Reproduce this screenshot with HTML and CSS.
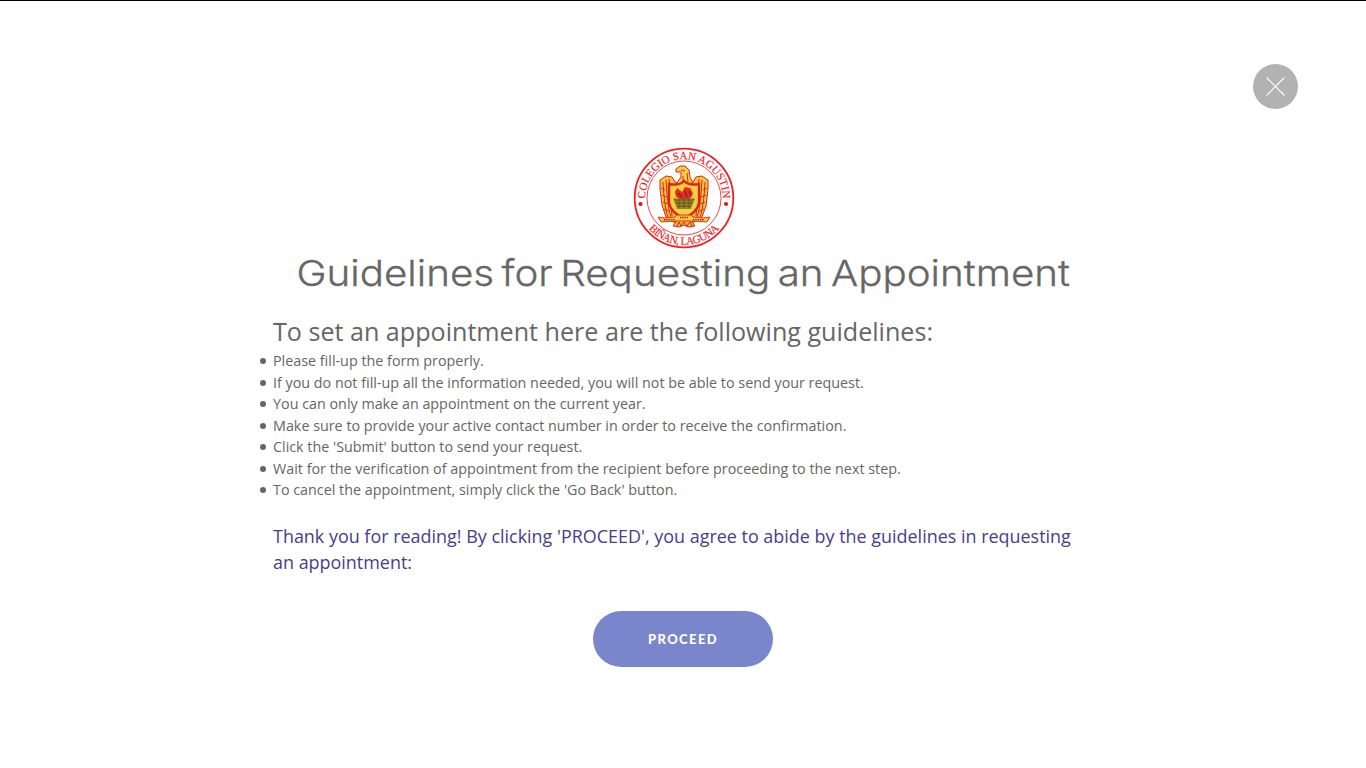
FILE: index.html
```html
<!DOCTYPE html>
<html lang="en">
<head>
<meta charset="utf-8">
<title>Guidelines for Requesting an Appointment</title>
<link rel="stylesheet" href="styles.css">
</head>
<body>
<header class="topbar">
  <button class="close" aria-label="Close">
    <svg width="45" height="45" viewBox="0 0 45 45"><path d="M13.5 13.5l18 18M31.5 13.5l-18 18" stroke="#fff" stroke-width="1.1" fill="none"/></svg>
  </button>
</header>
<main class="content">
  <svg class="seal" width="102" height="102" viewBox="-51 -51 102 102">
    <defs>
      <path id="arcFull" d="M0 38.8A38.8 38.8 0 1 1 .1 38.8"/>
      <path id="arcBottom" d="M-46.8 0A46.8 46.8 0 0 0 46.8 0"/>
    </defs>
    <circle r="49.3" fill="#fff" stroke="#f21d22" stroke-width="1.8"/>
    <circle r="37" fill="none" stroke="#f4494c" stroke-width="1"/>
    <text class="seal-text"><textPath href="#arcFull" startOffset="50%" text-anchor="middle" textLength="123">COLEGIO SAN AGUSTIN</textPath></text>
    <text class="seal-text"><textPath href="#arcBottom" startOffset="50%" text-anchor="middle" textLength="80">BIÑAN, LAGUNA</textPath></text>
    <circle cx="-43.5" cy="6" r="2.1" fill="#e8121a"/><circle cx="42" cy="6" r="2.1" fill="#e8121a"/>
    <g stroke="#d5281c" stroke-width="1" stroke-linejoin="round">
      <path d="M-24-18L-18-22L-12-21L-9-16L-5-15L5-15L9-16L12-21L18-22L24-18L24-9L22 8L18 19L10 24L-11 24L-18 19L-22 7L-24-9Z" fill="#f8c43c"/>
      <path d="M-21-16Q-20 7-16 20M-18-18Q-17 5-13 20M-15-19L-12 18M21-16Q20 7 16 20M18-18Q17 5 13 20M15-19L12 18" fill="none"/>
      <path d="M-23-10l4 2M-22-3l5 2M-21 4l5 2M-20 11l5 2M23-10l-4 2M22-3l-5 2M21 4l-5 2M20 11l-5 2" fill="none"/>
      <path d="M-8-26L-8-29L-4-32L1-32L5-28L6-21L9-15L-8-14L-3-21L-3-26Z" fill="#f9cd47"/>
      <path d="M-3-28L1-27M-1-22L-1-15M3-25L4-16" fill="none"/>
    </g>
    <path d="M-15-14Q-5-12 0-17Q5-12 15-14L15 5Q13 15 0 20Q-13 15-15 5Z" fill="#f8ce42" stroke="#db261d" stroke-width="2.4"/>
    <path d="M-9-6L-7-10L-2-6L1-11L6-10L9-5L7 0L0 3L-8-1Z" fill="#e62a1e"/>
    <path d="M-6-5L-2-1M1-7L3-1M5-7L7-3" stroke="#7c241c" stroke-width="1.2"/>
    <path d="M-11 0L-5 1L5 1L11 0L7 11L-7 11Z" fill="#98842b"/>
    <path d="M-10 2H10M-9 5H9M-7 8H7M-5 0V10M0 0V10M5 0V10" stroke="#53521f" stroke-width=".8"/>
    <path d="M-7 22L-11 28L-4 29L0 27L4 29L11 28L7 22Z" fill="#f4b43a" stroke="#d5281c"/>
    <path d="M-7 28l2-4 2 4 3-4 3 4 3-4 2 4" fill="none" stroke="#d5281c"/>
    <path d="M-26 19L-19 20L-9 19L-7 17H7L9 19L19 20L26 19L23 24L8 23H-8L-23 24Z" fill="#f8c640" stroke="#d5281c" stroke-width=".9"/>
    <path d="M-20 21.8L-9 21.6M9 21.6L20 21.8M-4 19.5H4" stroke="#a52b18" stroke-width="1.4" stroke-dasharray="1.5 .8"/>
  </svg>
  <h1 class="title"><span class="title-text">Guidelines for Requesting an Appointment</span></h1>
  <section class="guidelines">
    <h2 class="subtitle">To set an appointment here are the following guidelines:</h2>
    <ul class="rules">
      <li>Please fill-up the form properly.</li>
      <li>If you do not fill-up all the information needed, you will not be able to send your request.</li>
      <li>You can only make an appointment on the current year.</li>
      <li>Make sure to provide your active contact number in order to receive the confirmation.</li>
      <li>Click the 'Submit' button to send your request.</li>
      <li>Wait for the verification of appointment from the recipient before proceeding to the next step.</li>
      <li>To cancel the appointment, simply click the 'Go Back' button.</li>
    </ul>
    <p class="thanks">Thank you for reading! By clicking 'PROCEED', you agree to abide by the guidelines in requesting an appointment:</p>
  </section>
  <button class="proceed">PROCEED</button>
</main>
</body>
</html>
```
FILE: styles.css
```css
* { box-sizing: border-box; }
body {
  margin: 0;
  height: 768px;
  overflow: hidden;
  border-top: 1px solid #000;
  background: #fff;
  color: #666;
  font-family: "Open Sans", "Noto Sans", sans-serif;
}
.topbar { display: flex; justify-content: flex-end; padding: 63px 68px 0 0; }
.close {
  width: 45px;
  height: 45px;
  padding: 0;
  border: 0;
  border-radius: 50%;
  background: #b2b2b2;
}
.close svg { display: block; }
.content { display: flex; flex-direction: column; align-items: center; padding-top: 38px; }
.seal { display: block; margin-left: 1px; }
.seal-text { font: 11px "Liberation Serif", serif; fill: #ee1c22; stroke: #ee1c22; stroke-width: .15px; }
.title {
  display: flex;
  justify-content: center;
  margin: 0;
  height: 48px;
  line-height: 49px;
  font-family: Inter, sans-serif;
  font-size: 36px;
  font-weight: 300;
  word-spacing: -3.5px;
  -webkit-text-stroke: .3px #666;
  white-space: nowrap;
}
.title-text { display: block; transform: scaleX(1.12); }
.guidelines { width: 820px; }
.subtitle { margin: 17px 0 0; font-size: 25.12px; font-weight: 400; line-height: 34px; white-space: nowrap; }
.rules { margin: 2px 0 0; padding: 0; list-style: none; font-size: 14.34px; line-height: 21.5px; }
.rules li { display: flex; align-items: center; margin-left: -13px; white-space: nowrap; }
.rules li::before {
  content: "";
  width: 6px;
  height: 6px;
  margin: 1px 7px 0 0;
  border-radius: 50%;
  background: #666;
}
.thanks { margin: 22px 0 0; color: #483d8b; font-size: 17.95px; line-height: 26px; }
.proceed {
  width: 180px;
  height: 56px;
  margin-top: 36px;
  padding: 0;
  border: 0;
  border-radius: 28px;
  background: #7986cb;
  color: #fff;
  font: 900 13px/56px Lato, sans-serif;
  letter-spacing: 1.4px;
}
```
